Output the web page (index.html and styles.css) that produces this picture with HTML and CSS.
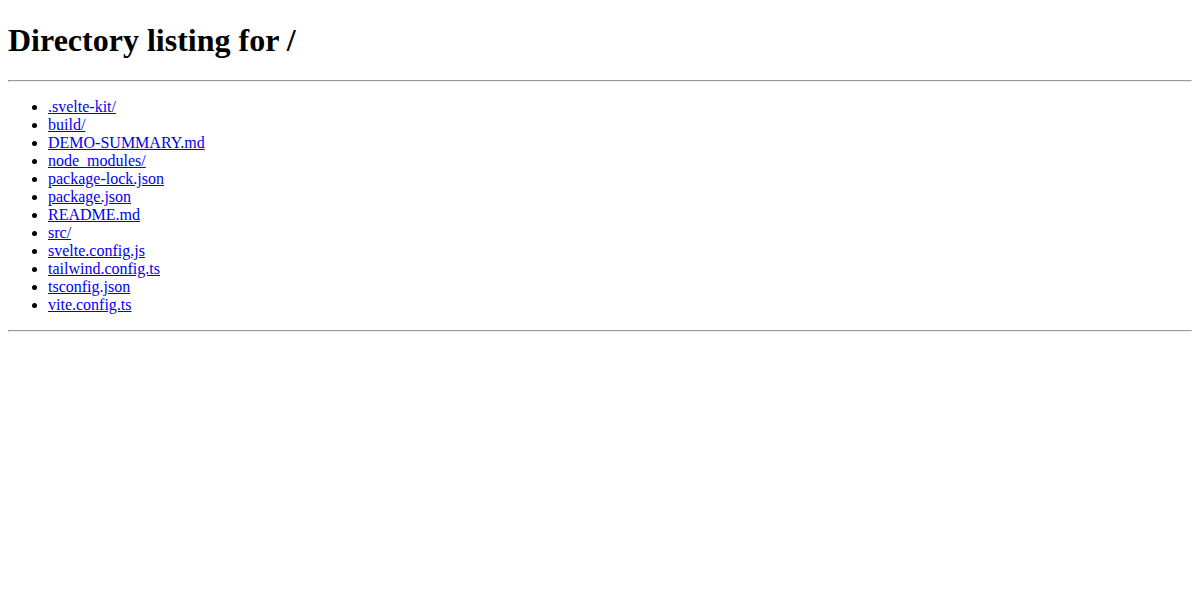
FILE: index.html
```html
<!DOCTYPE html>
<html lang="en">
<head>
    <meta charset="utf-8">
    <title>Directory listing for /</title>
    <link rel="stylesheet" href="styles.css">
</head>
<body>
<h1 class="title">Directory listing for /</h1>
<hr class="rule">
<ul class="listing">
<li><a href=".svelte-kit/">.svelte-kit/</a></li>
<li><a href="build/">build/</a></li>
<li><a href="DEMO-SUMMARY.md">DEMO-SUMMARY.md</a></li>
<li><a href="node_modules/">node_modules/</a></li>
<li><a href="package-lock.json">package-lock.json</a></li>
<li><a href="package.json">package.json</a></li>
<li><a href="README.md">README.md</a></li>
<li><a href="src/">src/</a></li>
<li><a href="svelte.config.js">svelte.config.js</a></li>
<li><a href="tailwind.config.ts">tailwind.config.ts</a></li>
<li><a href="tsconfig.json">tsconfig.json</a></li>
<li><a href="vite.config.ts">vite.config.ts</a></li>
</ul>
<hr class="rule">
</body>
</html>
```

FILE: styles.css
```css
body {
    font-family: "Liberation Serif", "Times New Roman", serif;
    font-size: 16px;
    margin: 8px;
    color: #000;
    background: #fff;
}
.title {
    font-size: 32px;
    font-weight: bold;
    margin: 14px 0 21px;
}
.rule {
    margin: 8px 0;
}
.listing {
    margin: 16px 0;
    padding-left: 40px;
}
.listing a {
    color: #0000ee;
}
```
